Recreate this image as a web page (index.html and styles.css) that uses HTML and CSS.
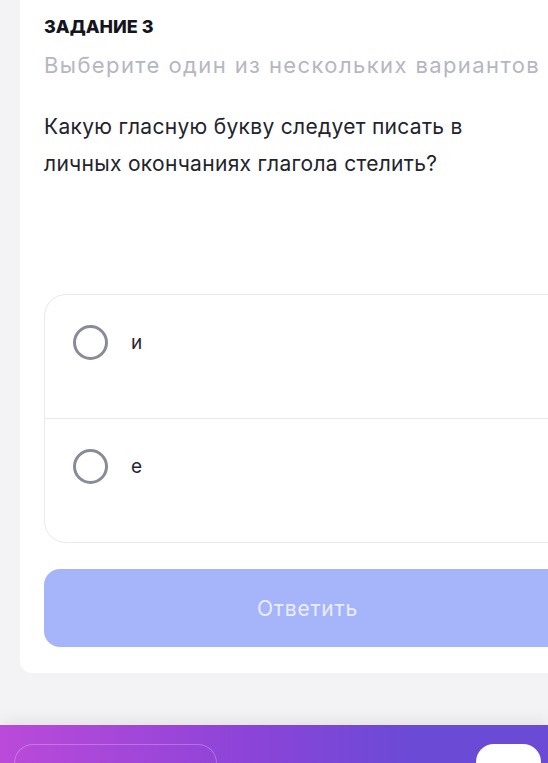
FILE: index.html
```html
<!DOCTYPE html>
<html lang="ru">
<head>
<meta charset="utf-8">
<title>Задание 3</title>
<link rel="stylesheet" href="styles.css">
</head>
<body>
<div class="page">
  <main class="card">
    <h1 class="task-title">ЗАДАНИЕ 3</h1>
    <p class="task-hint">Выберите один из нескольких вариантов</p>
    <p class="task-question">Какую гласную букву следует писать в личных окончаниях глагола стелить?</p>
    <div class="options">
      <label class="option">
        <span class="radio"></span>
        <span class="option-text">и</span>
      </label>
      <label class="option">
        <span class="radio"></span>
        <span class="option-text">е</span>
      </label>
    </div>
    <button class="submit" type="button">Ответить</button>
  </main>
  <nav class="bottom-bar">
    <div class="bar-outline"></div>
    <div class="bar-white"></div>
  </nav>
</div>
</body>
</html>
```
FILE: styles.css
```css
html, body {
  margin: 0;
  padding: 0;
}
body {
  width: 548px;
  height: 763px;
  overflow: hidden;
  background: #f3f3f6;
  font-family: Inter, "Noto Sans", sans-serif;
  color: #1d1d27;
}
.page {
  display: flex;
  flex-direction: column;
  height: 763px;
}
.card {
  margin-left: 20px;
  width: 575px;
  box-sizing: border-box;
  background: #ffffff;
  border-radius: 0 0 12px 12px;
  padding: 15px 24px 26px 24px;
  display: flex;
  flex-direction: column;
}
.task-title {
  margin: 0;
  font-size: 18px;
  line-height: 24px;
  font-weight: 800;
  color: #15151d;
}
.task-hint {
  margin: 12px 0 0;
  font-size: 22px;
  line-height: 28px;
  letter-spacing: 1.4px;
  color: #b6b6c1;
}
.task-question {
  margin: 29px 0 0;
  font-size: 21px;
  line-height: 37px;
  letter-spacing: 0.3px;
  font-weight: 400;
  color: #23232d;
  width: 470px;
}
.options {
  margin-top: 112px;
  border: 1px solid #e9e9ee;
  border-radius: 22px;
  display: flex;
  flex-direction: column;
}
.option {
  display: flex;
  align-items: center;
  gap: 23px;
  padding: 30px 0 58px 28px;
}
.option + .option {
  border-top: 1px solid #e9e9ee;
}
.radio {
  width: 35px;
  height: 35px;
  box-sizing: border-box;
  border: 3px solid #8b8a98;
  border-radius: 50%;
  flex: none;
}
.option-text {
  font-size: 19px;
  color: #262630;
}
.submit {
  margin-top: 26px;
  height: 78px;
  border: none;
  border-radius: 16px;
  background: #a6b5f9;
  color: #e9edfe;
  font-family: Inter, "Noto Sans", sans-serif;
  font-size: 21px;
  letter-spacing: 0.8px;
}
.bottom-bar {
  margin-top: auto;
  height: 38px;
  background: linear-gradient(90deg, #bb4ad9 0%, #8c44d8 45%, #6b4ad6 75%, #6b4ad6 100%);
  box-shadow: 0 -6px 14px rgba(0, 0, 0, 0.06);
  display: flex;
  justify-content: space-between;
  align-items: flex-end;
  padding: 0 7px 0 14px;
}
.bar-outline {
  width: 201px;
  height: 18px;
  border: 1px solid rgba(255, 255, 255, 0.25);
  border-bottom: none;
  border-radius: 20px 20px 0 0;
}
.bar-white {
  width: 65px;
  height: 19px;
  background: #ffffff;
  border-radius: 18px 18px 0 0;
}
```
